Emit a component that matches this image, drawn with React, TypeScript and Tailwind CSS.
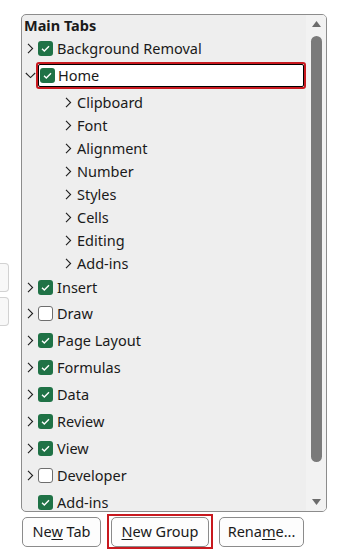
import React from 'react';

type Item = { label: string; checked: boolean; chevron?: boolean };

const topItems: Item[] = [
  { label: 'Insert', checked: true, chevron: true },
  { label: 'Draw', checked: false, chevron: true },
  { label: 'Page Layout', checked: true, chevron: true },
  { label: 'Formulas', checked: true, chevron: true },
  { label: 'Data', checked: true, chevron: true },
  { label: 'Review', checked: true, chevron: true },
  { label: 'View', checked: true, chevron: true },
  { label: 'Developer', checked: false, chevron: true },
  { label: 'Add-ins', checked: true, chevron: false },
];

const homeGroups = ['Clipboard', 'Font', 'Alignment', 'Number', 'Styles', 'Cells', 'Editing', 'Add-ins'];

function ChevronRight() {
  return (
    <svg width="7" height="11" viewBox="0 0 7 11" className="shrink-0">
      <path d="M1 0.8 L5.6 5.5 L1 10.2" fill="none" stroke="#1f1f1f" strokeWidth="1.1" />
    </svg>
  );
}

function ChevronDown() {
  return (
    <svg width="11" height="7" viewBox="0 0 11 7" className="shrink-0">
      <path d="M0.8 1 L5.5 5.6 L10.2 1" fill="none" stroke="#1f1f1f" strokeWidth="1.1" />
    </svg>
  );
}

function Check({ checked }: { checked: boolean }) {
  if (!checked) {
    return <div className="w-[15px] h-[15px] shrink-0 rounded-[3px] border border-[#6e6e6e] bg-white" />;
  }
  return (
    <div className="w-[15px] h-[15px] shrink-0 rounded-[3px] bg-[#1f7246] flex items-center justify-center">
      <svg width="15" height="15" viewBox="0 0 15 15">
        <path d="M4 7.8 L6.3 10 L11 5.3" fill="none" stroke="#ffffff" strokeWidth="1.4" />
      </svg>
    </div>
  );
}

function TopRow({ item, h = 'h-[27px]' }: { item: Item; h?: string }) {
  return (
    <div className={`${h} flex items-center pl-[5px] shrink-0`}>
      <div className="w-[11px] shrink-0">{item.chevron && <ChevronRight />}</div>
      <Check checked={item.checked} />
      <span className="ml-[4px] whitespace-nowrap">{item.label}</span>
    </div>
  );
}

function Btn({ children, className = '' }: { children: React.ReactNode; className?: string }) {
  return (
    <button className={`h-[30px] rounded-[5px] border border-[#8b8b8b] bg-[#fdfdfd] text-[#1a1a1a] text-[14.5px] ${className}`}>
      {children}
    </button>
  );
}

export default function App() {
  return (
    <div
      className="w-[337px] h-[551px] bg-white flex overflow-hidden text-[#1a1a1a]"
      style={{ fontFamily: '"Noto Sans", "Open Sans", sans-serif' }}
    >
      <div className="w-[21px] shrink-0 flex flex-col pt-[263px] gap-[5px]">
        <div className="w-[9px] h-[29px] border border-l-0 border-[#d2d2d2] rounded-r-[4px] bg-[#f8f8f8]" />
        <div className="w-[9px] h-[29px] border border-l-0 border-[#d2d2d2] rounded-r-[4px] bg-[#f8f8f8]" />
      </div>

      <div className="w-[306px] shrink-0 flex flex-col pt-[14px]">
        <div className="h-[498px] border border-[#8c8c8c] rounded-[5px] bg-[#eeeeee] flex overflow-hidden">
          <div className="flex-1 flex flex-col overflow-hidden text-[14.5px] leading-none">
            <div className="h-[20px] flex items-center pl-[2px] font-bold shrink-0">Main Tabs</div>
            <TopRow item={{ label: 'Background Removal', checked: true, chevron: true }} />
            <div className="h-[27px] flex items-center pl-[3px] shrink-0">
              <div className="w-[11px] shrink-0 flex items-center">
                <ChevronDown />
              </div>
              <div className="flex-1 h-[27px] border-2 border-[#c8191f] rounded-[3px]">
                <div className="h-full border border-black rounded-[2px] bg-white flex items-center pl-[1px]">
                  <Check checked />
                  <span className="ml-[3px]">Home</span>
                </div>
              </div>
            </div>
            <div className="mt-[2px] flex flex-col shrink-0">
              {homeGroups.map((g, i) => (
                <div key={i} className="h-[23px] flex items-center pl-[43px] shrink-0">
                  <ChevronRight />
                  <span className="ml-[5px]">{g}</span>
                </div>
              ))}
            </div>
            <TopRow item={topItems[0]} h="h-[25px]" />
            {topItems.slice(1).map((it) => (
              <TopRow key={it.label} item={it} />
            ))}
          </div>

          <div className="w-[20px] shrink-0 bg-[#f2f2f2] flex flex-col items-center pt-[6px] pb-[6px]">
            <svg width="9" height="6" viewBox="0 0 9 6" className="shrink-0">
              <path d="M4.5 0 L9 6 L0 6 Z" fill="#6c6c6c" />
            </svg>
            <div className="mt-[9px] w-[11px] h-[426px] rounded-full bg-[#7a7a7a] shrink-0" />
            <div className="flex-1" />
            <svg width="9" height="6" viewBox="0 0 9 6" className="shrink-0">
              <path d="M0 0 L9 0 L4.5 6 Z" fill="#6c6c6c" />
            </svg>
          </div>
        </div>

        <div className="flex items-center mt-[2px]">
          <Btn className="w-[79px] ml-[1px]">
            Ne<span className="underline underline-offset-2">w</span> Tab
          </Btn>
          <div className="ml-[6px] border-2 border-[#c8191f] p-[2px] h-[35px] flex items-center">
            <Btn className="w-[98px] h-[29px]">
              <span className="underline underline-offset-2">N</span>ew Group
            </Btn>
          </div>
          <Btn className="w-[85px] ml-[6px]">
            Rena<span className="underline underline-offset-2">m</span>e...
          </Btn>
        </div>
      </div>
    </div>
  );
}
